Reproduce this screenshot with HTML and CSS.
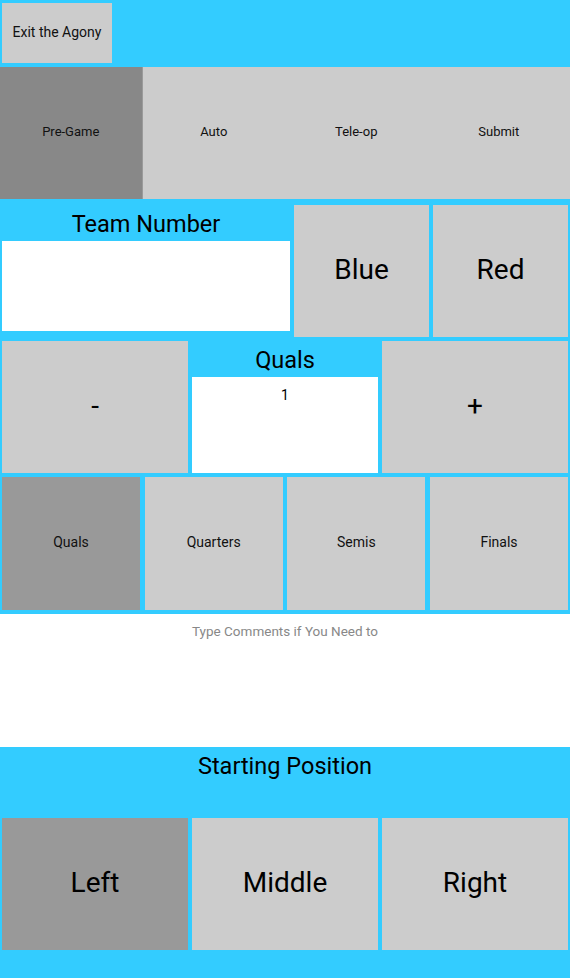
FILE: index.html
```html
<!DOCTYPE html>
<html>
<head>
<meta charset="utf-8">
<link rel="stylesheet" href="styles.css">
</head>
<body>
<div class="top">
  <button class="btn exit">Exit the Agony</button>
</div>
<div class="tabs">
  <button class="tab active">Pre-Game</button>
  <button class="tab">Auto</button>
  <button class="tab">Tele-op</button>
  <button class="tab">Submit</button>
</div>
<div class="main">
  <div class="row team-row">
    <div class="field">
      <div class="label">Team Number</div>
      <input class="team-input" type="text">
    </div>
    <button class="btn big">Blue</button>
    <button class="btn big">Red</button>
  </div>
  <div class="row three">
    <button class="btn big">-</button>
    <div class="field">
      <div class="label">Quals</div>
      <div class="quals-input">1</div>
    </div>
    <button class="btn big">+</button>
  </div>
  <div class="row four">
    <button class="btn small sel">Quals</button>
    <button class="btn small">Quarters</button>
    <button class="btn small">Semis</button>
    <button class="btn small">Finals</button>
  </div>
</div>
<textarea class="comments" placeholder="Type Comments if You Need to"></textarea>
<div class="start">
  <div class="start-label">Starting Position</div>
  <div class="row three start-row">
    <button class="btn big sel">Left</button>
    <button class="btn big">Middle</button>
    <button class="btn big">Right</button>
  </div>
</div>
</body>
</html>
```
FILE: styles.css
```css
* { box-sizing: border-box; }
html, body {
  margin: 0;
  padding: 0;
  background: #33ccff;
  font-family: Roboto, "Noto Sans", sans-serif;
  color: #000;
  height: 978px;
  overflow: hidden;
}
.btn, .tab {
  font-family: Roboto, sans-serif;
  border: none;
  margin: 0;
  padding: 0 0 3px;
  background: #cccccc;
  color: #111;
}
.top {
  padding: 3px 2px 4px;
  display: flex;
}
.exit {
  width: 110px;
  height: 60px;
  font-size: 14px;
}
.tabs {
  display: grid;
  grid-template-columns: repeat(4, 1fr);
  height: 132px;
}
.tab {
  font-size: 13px;
  height: 132px;
}
.tab.active {
  background: #888888;
  border-right: 1px solid #9a9a9a;
}
.main {
  display: flex;
  flex-direction: column;
  gap: 4px;
  padding: 6px 2px 0;
}
.row {
  display: grid;
  gap: 4px;
  height: 132px;
}
.team-row { grid-template-columns: 288px 135px 135px; }
.three { grid-template-columns: repeat(3, 1fr); }
.four { grid-template-columns: repeat(4, 1fr); gap: 4.67px; height: 133px; }
.field {
  display: flex;
  flex-direction: column;
}
.label {
  height: 36px;
  line-height: 36px;
  padding-top: 1px;
  text-align: center;
  font-size: 23.5px;
}
.team-input {
  height: 90px;
  border: none;
  background: #fff;
  outline: none;
  margin: 0;
}
.quals-input {
  height: 96px;
  background: #fff;
  text-align: center;
  font-size: 14px;
  padding-top: 10px;
}
.big { font-size: 28px; color: #000; }
.small { font-size: 14px; }
.sel { background: #999999; }
.comments {
  display: block;
  width: 100%;
  height: 133px;
  margin: 4px 0 0;
  border: none;
  background: #fff;
  resize: none;
  text-align: center;
  font-family: Roboto, sans-serif;
  font-size: 13.5px;
  padding-top: 9px;
  outline: none;
}
.comments::placeholder { color: #888; }
.start {
  display: flex;
  flex-direction: column;
}
.start-label {
  height: 71px;
  padding-top: 5px;
  text-align: center;
  font-size: 23.5px;
}
.start-row {
  padding: 0 2px;
}
```
